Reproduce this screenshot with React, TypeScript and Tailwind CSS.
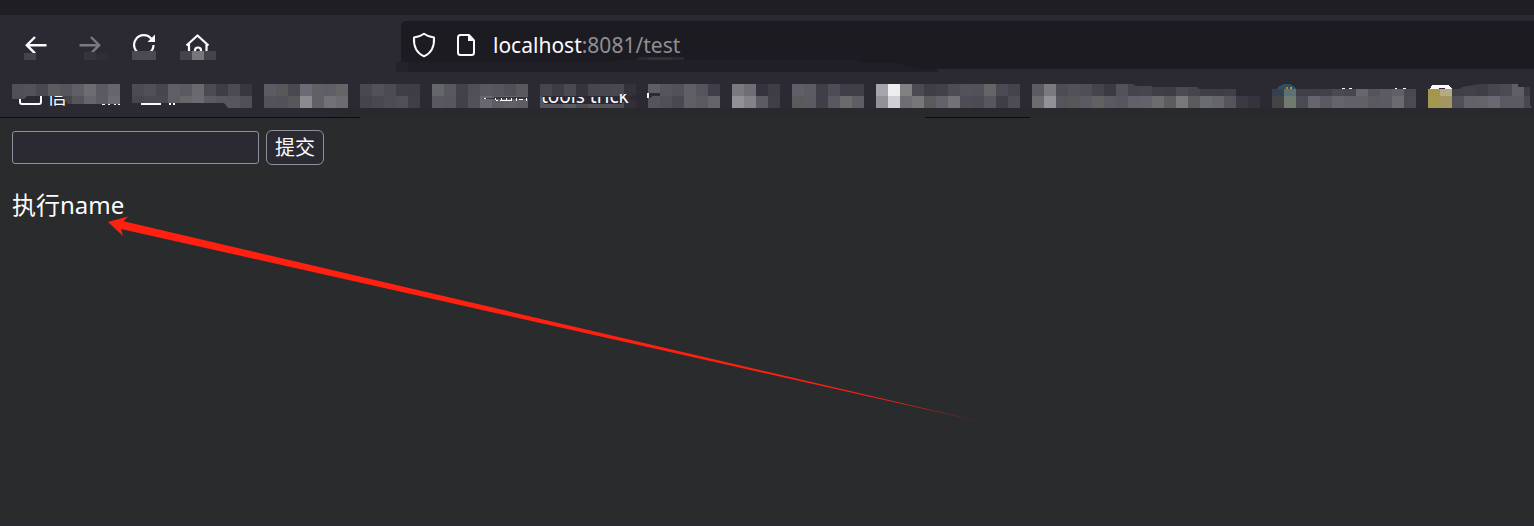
import type { ReactNode } from "react";

const CELL = 12;

type MosaicProps = {
  rows: string[];
  clip?: string;
  under?: ReactNode;
  over?: ReactNode;
};

/* Each row is a list of hex colours; "-" leaves the toolbar visible. */
function Mosaic({ rows, clip, under, over }: MosaicProps) {
  const grid = rows.map((row) => row.split(" "));
  const width = grid[0].length * CELL;
  return (
    <svg
      width={width}
      height={24}
      viewBox={`0 0 ${width} 24`}
      className="block shrink-0 overflow-visible"
      shapeRendering="crispEdges"
      aria-hidden="true"
    >
      {under}
      <g style={clip ? { clipPath: `polygon(${clip})` } : undefined}>
        <rect width={width} height={24} fill="none" />
        {grid.map((row, y) =>
          row.map((c, x) =>
            c === "-" ? null : (
              <rect key={`${x}-${y}`} x={x * CELL} y={y * CELL} width={CELL} height={CELL} fill={`#${c}`} />
            ),
          ),
        )}
      </g>
      {over}
    </svg>
  );
}

function NavButton({ label, disabled, children }: { label: string; disabled?: boolean; children: ReactNode }) {
  return (
    <button type="button" aria-label={label} disabled={disabled} className="h-9 w-[54px] shrink-0">
      <svg width="54" height="36" viewBox="0 0 54 36" fill="none" className="block">
        {children}
      </svg>
    </button>
  );
}

function NavBar() {
  return (
    <div className="flex items-center pt-[6px] pb-[15px] pl-[9px]">
      <NavButton label="Back">
        <path d="M37.500 18.200H18M26 10L17.800 18.200L26 26.400" stroke="#fbfbfe" strokeWidth="2.400" />
        <path d="M15 26h12v7H15z" fill="#45444d" />
      </NavButton>
      <NavButton label="Forward" disabled>
        <path d="M16.500 18.200H36M28 10L36.200 18.200L28 26.400" stroke="#7a7980" strokeWidth="2.400" />
        <path d="M21 25h12v8H21z" fill="#35343d" />
        <path d="M33 26h11v7H33z" fill="#2f2e37" />
      </NavButton>
      <NavButton label="Reload">
        <path d="M34.500 12A9.700 9.700 0 1 0 36.500 18" stroke="#fbfbfe" strokeWidth="2.200" />
        <path d="M38 7.500V15H30.500z" fill="#fbfbfe" />
        <path d="M15 24h24v9H15z" fill="#4b4a53" />
      </NavButton>
      <NavButton label="Home">
        <path
          d="M15.500 18.500L26.500 8.500L37.500 18.500M18 17V27M35.500 17V27M24 27V23.500a3 3 0 0 1 6 0V27"
          stroke="#fbfbfe"
          strokeWidth="2.200"
          strokeLinejoin="round"
        />
        <path d="M9 24h36v9H9z" fill="#45444d" />
        <path d="M21 24h12v9H21z" fill="#77767b" />
      </NavButton>
      <div className="relative ml-[176px] flex h-12 flex-1 items-center rounded-l-[5px] bg-[#1c1b22] pl-[11px]">
        <svg
          width="545"
          height="10"
          viewBox="0 0 545 10"
          className="absolute top-[41px] -left-[5px] overflow-visible"
          aria-hidden="true"
        >
          <path d="M0 0H215L223 -2H461L463 1H500L512 4L520 7H540L544 10H0z" fill="#201f28" />
          <path d="M0 0H12V10H0z" fill="#24232c" />
        </svg>
        <svg width="24" height="26" viewBox="0 0 24 26" fill="none" className="shrink-0" aria-hidden="true">
          <path
            d="M12 1.800C15 4 18.500 5.300 22 5.600C22.500 13.500 20.500 20.500 12 24.300C3.500 20.500 1.500 13.500 2 5.600C5.500 5.300 9 4 12 1.800z"
            stroke="#fbfbfe"
            strokeWidth="2"
            strokeLinejoin="round"
          />
        </svg>
        <svg width="20" height="24" viewBox="0 0 20 24" fill="none" className="ml-[20px] shrink-0" aria-hidden="true">
          <path
            d="M13 2H4.500A2.500 2.500 0 0 0 2 4.500V19.500A2.500 2.500 0 0 0 4.500 22H15.500A2.500 2.500 0 0 0 18 19.500V7.500z"
            stroke="#fbfbfe"
            strokeWidth="2"
            strokeLinejoin="round"
          />
          <path d="M12 1.500V8H18.500z" fill="#fbfbfe" />
        </svg>
        <div className="ml-[17px] text-[21px] leading-[28px] text-[#8f8f94]">
          <span className="text-[#fbfbfe]">localhost</span>:8081/test
        </div>
        <svg width="48" height="3" viewBox="0 0 48 3" className="absolute top-[36px] left-[235px]" aria-hidden="true">
          <path d="M3 0H48V3H0z" fill="#2b2a30" />
          <path d="M12 0H36V3H12z" fill="#323137" />
        </svg>
      </div>
    </div>
  );
}

function BookmarksBar() {
  return (
    <div className="relative flex gap-3 overflow-hidden pb-[10px] pl-3">
      <Mosaic
        rows={[
          "504f57 53525a 4a4951 5c5c5f 555659 605f67 6d6c71 5b5a63 66656d",
          "504f57 53525a 4a4951 5c5c5f 47464e 55545b 66656c 5c5b63 6b6a70",
        ]}
        clip="0 0, 108px 0, 108px 20px, 56px 20px, 50px 12px, 15px 12px, 12px 15px, 0 15px"
        under={
          <>
            <path d="M8 10V18a2 2 0 0 0 2 2H27a2 2 0 0 0 2-2V10" fill="none" stroke="#fbfbfe" strokeWidth="2" shapeRendering="auto" />
            <text x="35" y="20" fontSize="20" fill="#fbfbfe">
              信
            </text>
            <path d="M90 20h3v1h-3zM96 20h2v1h-2zM102 20h2v1h-2zM106 20h2v1h-2z" fill="#fbfbfe" />
          </>
        }
      />
      <Mosaic
        rows={[
          "4c4b53 504f58 47464e 605f66 5a5a60 68696d 4b4a52 3e3d46 4b4b53 383740",
          "47464e 494850 4a4951 5e5e63 66666b 6b6b74 5c5b62 57565f 57565f 504f58",
        ]}
        clip="0 0, 120px 0, 120px 24px, 96px 24px, 92px 19px, 0 19px"
        under={<path d="M9 19h20v2H9zM37 19h2v2h-2zM41 19h2v2h-2z" fill="#fbfbfe" />}
      />
      <Mosaic
        rows={[
          "5c5b63 58585b 4a4951 6c6b74 606165 5f5e66 656567",
          "53525b 525159 57575a 8b8a8f 616067 727176 6c6c70",
        ]}
      />
      <Mosaic rows={["494851 52515a 4c4b54 3f3e47 3e3d46", "45444d 494851 4d4c55 504f58 403f48"]} />
      <Mosaic
        rows={[
          "65666a 58595c 43424b 504f58 595861 56555e 504f57 58585d",
          "595861 57565f 42414a 52515a 696871 5e5d64 616065 5e5e62",
        ]}
        over={
          <>
            <path d="M51 14h12v1h-12zM62 13h34v2h-34z" fill="#35343c" />
            <path d="M52 14h2v1h-2zM63 14h1v2h-1zM64 16h2v1h-2zM68 16h12v1h-12zM69 14h1v2h-1zM74 14h1v2h-1zM79 14h1v2h-1zM84 14h1v3h-1zM87 15h4v1h-4zM94 14h1v3h-1z" fill="#fbfbfe" />
          </>
        }
      />
      <Mosaic
        rows={[
          "46454e 3d3c45 4a4951 35343d 47464f 484750 494851 33323b",
          "57565f 55545d 5c5b62 4d4c55 56555e 53525b 504f58 31303a",
        ]}
        over={
          <>
            <path d="M2 12h76l6-1h3v3l-6 6H4l-2-2z" fill="#2b2a33" />
            <g style={{ clipPath: "polygon(0 14px, 78px 14px, 78px 11px, 96px 11px, 96px 24px, 0 24px)" }}>
              <text x="1" y="19" fontSize="19" fill="#fbfbfe">
                tools trick
              </text>
            </g>
            <path d="M89 13l10-4h9v4h-10v3H89z" fill="#2b2a33" />
          </>
        }
      />
      <Mosaic
        rows={["5f5e67 56555e 52515a 605f68 55545d 403f49", "55545d 504f58 494851 5f5f64 5a5a60 64646a"]}
        over={
          <>
            <path d="M0 9h12v3H5l-3 2H0z" fill="#2b2a33" />
            <path d="M-1 9h2v5h-2z" fill="#fbfbfe" />
          </>
        }
      />
      <Mosaic rows={["7a797e 6f6e74 35343e 3e3d46", "929197 838287 5c5b64 403f48"]} />
      <Mosaic rows={["605f69 5c5b64 403f48 4e4d57 403f48 403f48", "5a5a5d 5b5a63 403f48 595862 6a6a6d 5e5d66"]} />
      <Mosaic
        rows={[
          "a5a4aa eeeef1 818184 4a4a53 3f3e47 42414a 4d4c55 53525b 52515a 656568 4b4a53 45444d",
          "929296 cfcfd4 6c6e71 77767b 5a5a5d 63626b 707276 4e4d57 4c4b54 57565f 3f3e47 4d4c55",
        ]}
      />
      <Mosaic
        rows={[
          "5c5b64 7a797e 4d4c55 52515a 4f4e57 45444d 3b3a43 53525b 45444d 47464f 403f48 3e3d46 4b4a53 46454e 3f3e47 3e3d46 403f48 - -",
          "6c6b70 929197 55545d 57575a 5b5a62 616164 5a5962 57565f 62616b 63626c 6b6c70 5c5c5f 78777c 5b5b5e 6a6b6f 65666a 55545d 3b3a44 35343e",
        ]}
        clip="0 0, 101px 0, 104px 2px, 120px 2px, 120px 3px, 165px 3px, 167px 5px, 228px 5px, 228px 24px, 0 24px"
      />
      <Mosaic
        rows={[
          "33424d 5b7274 3f414a 403f48 42414a 4a4951 47464f 66666b 55545d 5c5c60 616064 494851",
          "434445 717a71 494b54 66656f 5b5a63 65646d 616069 616165 5a5962 5b5a62 6b6a6e 4b4a53",
        ]}
        clip="0 5px, 144px 5px, 144px 24px, 0 24px"
        under={
          <>
            <path d="M5 5Q8 0 15 0T24 5z" fill="#30505f" />
            <path d="M14 3h2v2h-2z" fill="#ff620d" />
            <path d="M18 3h2v2h-2z" fill="#a8984a" />
            <path d="M70 4h3v1h-3zM77 4h3v1h-3zM123 4h2v1h-2zM131 4h3v1h-3z" fill="#fbfbfe" />
          </>
        }
      />
      <Mosaic
        rows={[
          "a39750 b4ac81 403f48 42414a 3f3e47 47464f 4b4a53 5f5f63 3d3c45",
          "a3984f a29761 504f58 63626b 63646a 6a6973 5b5a63 5b5a63 484750",
        ]}
        clip="0 5px, 32px 5px, 34px 3px, 52px 0, 90px 0, 90px 3px, 102px 3px, 102px 20px, 104px 24px, 0 24px"
        under={
          <>
            <path d="M2 6Q3 1 6 1H19Q23 1 24 6z" fill="#fbfbfe" />
            <path d="M11 4h6v1h-6z" fill="#2b2a33" />
          </>
        }
      />
      <svg width="1534" height="34" viewBox="0 0 1534 34" className="absolute top-0 left-0" aria-hidden="true">
        <path d="M300 24H1534V34H360z" fill="#29282d" />
        <path d="M0 33H360V34H0zM925 33H1030V34H925z" fill="#0c0c0d" />
      </svg>
    </div>
  );
}

export default function App() {
  return (
    <div className="flex min-h-screen flex-col bg-[#2b2a33] font-['Noto_Sans','Noto_Sans_CJK_SC',sans-serif] text-[#fbfbfe]">
      <header className="overflow-hidden">
        <div className="h-[15px] bg-[#1f1e25]" />
        <NavBar />
        <BookmarksBar />
      </header>
      <main className="relative flex-1 overflow-hidden bg-[#2a2b2d] px-3 pt-3">
        <form className="flex items-center gap-[7px]" onSubmit={(e) => e.preventDefault()}>
          <input
            type="text"
            name="name"
            aria-label="name"
            className="h-[33px] w-[247px] rounded-[3px] border border-[#8f8f9d] bg-[#2b2a33] px-2 text-[20px] outline-none"
          />
          <button
            type="submit"
            className="h-[35px] w-[58px] rounded-[6px] border border-[#8f8f9d] bg-[#2b2a33] text-[20px] leading-[32px]"
          >
            提交
          </button>
        </form>
        <p className="mt-[24px] text-[24px] leading-[32px]">执行name</p>
        <svg
          width="880"
          height="208"
          viewBox="108 216 880 208"
          className="pointer-events-none absolute top-[98px] left-[108px]"
          aria-hidden="true"
        >
          <defs>
            <linearGradient id="fade" gradientUnits="userSpaceOnUse" x1="108" y1="222" x2="985" y2="422">
              <stop offset="0.900" stopColor="#ff2010" />
              <stop offset="1" stopColor="#ff2010" stopOpacity="0.500" />
            </linearGradient>
          </defs>
          <path d="M108 222L128 216.500L123.500 221.300L986 422.800L121 229L123 236z" fill="url(#fade)" />
        </svg>
      </main>
      <div className="h-[2px] bg-[#2b2a33]" />
    </div>
  );
}
